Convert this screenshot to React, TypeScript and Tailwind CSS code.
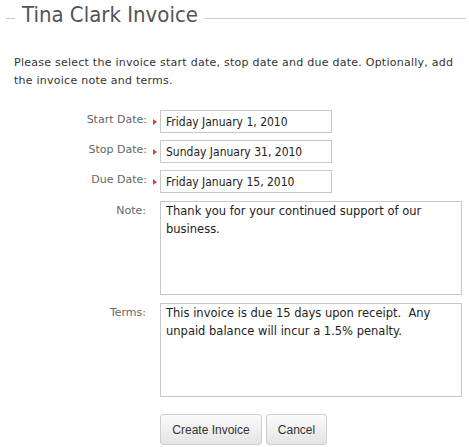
import React from 'react';

const font = "font-['DejaVu_Sans',sans-serif]";
const fieldFont = "font-['DejaVu_Sans_Condensed','DejaVu_Sans',sans-serif]";

function Marker() {
  return <span className="block w-0 h-0 border-y-[3px] border-y-transparent border-l-[4px] border-l-[#d9443a]" />;
}

function DateRow({ label, value }: { label: string; value: string }) {
  return (
    <div className="flex items-center h-[23px]">
      <label className="w-[147px] text-right text-[11px] text-[#666] -mt-[3px]">{label}</label>
      <div className="w-[13px] flex justify-center pl-[2px]">
        <Marker />
      </div>
      <input
        defaultValue={value}
        readOnly
        className={`w-[172px] h-[23px] border border-[#c8c8c8] px-[5px] text-[12px] text-[#222] outline-none ${fieldFont}`}
      />
    </div>
  );
}

function TextRow({ label, value }: { label: string; value: string }) {
  return (
    <div className="flex items-start">
      <label className="w-[147px] text-right text-[11px] text-[#666] pt-[2px] pr-[1px]">{label}</label>
      <div className="w-[13px]" />
      <textarea
        defaultValue={value}
        readOnly
        className={`w-[302px] h-[94px] border border-[#c8c8c8] px-[5px] py-0 text-[11.5px] leading-[18px] text-[#222] outline-none resize-none ${font}`}
      />
    </div>
  );
}

export default function App() {
  return (
    <div className={`w-[469px] h-[447px] bg-white overflow-hidden ${font}`}>
      <div className="flex items-center h-[36px] pl-[6px] pr-[3px]">
        <div className="w-[9px] h-px bg-[#c8c8c8]" />
        <h1 className={`px-[7px] text-[22px] leading-none text-[#555] -mt-[6px] ${fieldFont}`}>Tina Clark Invoice</h1>
        <div className="flex-1 h-px bg-[#c8c8c8]" />
      </div>

      <p className="mt-[18px] px-[14px] text-[11px] leading-[18px] tracking-[0.25px] text-[#333]">
        Please select the invoice start date, stop date and due date. Optionally, add the invoice note and terms.
      </p>

      <div className="mt-[20px] flex flex-col gap-[7px]">
        <DateRow label="Start Date:" value="Friday January 1, 2010" />
        <DateRow label="Stop Date:" value="Sunday January 31, 2010" />
        <DateRow label="Due Date:" value="Friday January 15, 2010" />
      </div>

      <div className="mt-[8px] flex flex-col gap-[8px]">
        <TextRow label="Note:" value="Thank you for your continued support of our business." />
        <TextRow label="Terms:" value="This invoice is due 15 days upon receipt.  Any unpaid balance will incur a 1.5% penalty." />
      </div>

      <div className="mt-[17px] pl-[160px] flex gap-[4px] font-['Liberation_Sans',Arial,sans-serif]">
        <button className="w-[102px] h-[31px] rounded-[3px] border border-[#cfcfcf] bg-gradient-to-b from-[#fbfbfb] to-[#e4e4e4] text-[12px] text-[#333]">
          Create Invoice
        </button>
        <button className="w-[61px] h-[31px] rounded-[3px] border border-[#cfcfcf] bg-gradient-to-b from-[#fbfbfb] to-[#e4e4e4] text-[12px] text-[#333]">
          Cancel
        </button>
      </div>
    </div>
  );
}
